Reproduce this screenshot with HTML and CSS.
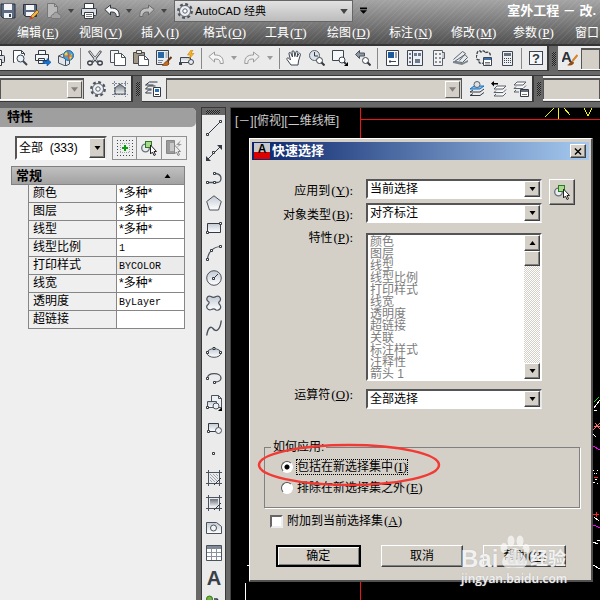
FILE: index.html
```html
<!DOCTYPE html>
<html lang="zh-CN">
<head>
<meta charset="utf-8">
<meta name="viewport" content="width=device-width, initial-scale=1">
<title>室外工程 - 改</title>
<link rel="stylesheet" href="styles.css">
</head>
<body>
<svg class="defs" aria-hidden="true">
  <defs>
    <linearGradient id="fade" x1="0" y1="0" x2="0" y2="1"><stop offset="0" stop-color="#c3cad4"/><stop offset="1" stop-color="#fff"/></linearGradient>
    <linearGradient id="deep" x1="0" y1="0" x2="0" y2="1"><stop offset="0" stop-color="#6d737c"/><stop offset="1" stop-color="#f4f5f7"/></linearGradient>
  </defs>
  <symbol id="save" viewBox="0 0 16 16"><path d="M1 1h14v14H3l-2-2z" fill="#5d6b80" stroke="#2b323d"/><path d="M4 1h8v6H4zM4 10h8v5H4z" fill="#f3f5f8"/><path d="M9 11h2v3H9z" fill="#39424f"/></symbol>
  <symbol id="saveas" viewBox="0 0 16 16"><path d="M.5 1.5h13v12h-11l-2-2z" fill="#5d6b80" stroke="#2b323d"/><path d="M3 2h8v5H3zM3 9h8v4H3z" fill="#f3f5f8"/><path d="M8 13l6-6 2 2-6 6-3 1z" fill="#f0b440" stroke="#7a4a10" stroke-width=".7"/><path d="M7 16l1-3 2 2z" fill="#d33"/></symbol>
  <symbol id="cloud" viewBox="0 0 16 16"><path d="M1.500.500h7l3 3v11h-10z" fill="#b9b9b9" stroke="#777"/><path d="M8.500.500v3h3" fill="none" stroke="#777"/><path d="M6 15.500c-2-2-.5-4 1.500-4 .5-3 4.500-3 5-.5 3 0 3.500 4.500 1 4.500z" fill="#a3a3a3" stroke="#777"/></symbol>
  <symbol id="print" viewBox="0 0 16 16"><path d="M3.500 6V.500h9V6" fill="#fff" stroke="#333a44"/><rect x=".5" y="5.500" width="15" height="7" rx="1" fill="#d9dde3" stroke="#333a44"/><path d="M3.500 9.500h9v6h-9z" fill="#fff" stroke="#333a44"/><path d="M5 11.500h6M5 13.500h6" stroke="#777"/></symbol>
  <symbol id="undo" viewBox="0 0 16 16"><path d="M.8 6.500L6.500 2v3c6 0 9 2 8.700 8.500h-3c0-4-1.700-4.500-5.700-4.500v3z" fill="#f6f6f6" stroke="currentColor"/></symbol>
  <symbol id="redo" viewBox="0 0 16 16"><path d="M15.200 6.500L9.500 2v3c-6 0-9 2-8.700 8.500h3c0-4 1.700-4.500 5.700-4.500v3z" fill="#f0f0f0" fill-opacity=".5" stroke="currentColor"/></symbol>
  <symbol id="down" viewBox="0 0 6 4"><path d="M0 0h6L3 4z" fill="currentColor"/></symbol>
  <symbol id="more" viewBox="0 0 8 8"><path d="M0 0h8v2H0zM0 3h8L4 7z" fill="#000"/></symbol>
  <symbol id="gear" viewBox="0 0 16 16"><circle cx="8" cy="8" r="6.700" fill="none" stroke="#4d545e" stroke-width="2.400" stroke-dasharray="2.800 2.460"/><circle cx="8" cy="8" r="5.500" fill="#eef0f3" stroke="#59616c"/><circle cx="8" cy="8" r="2.200" fill="#fff" stroke="#59616c"/></symbol>
  <symbol id="preview" viewBox="0 0 16 16"><path d="M2.500 12.500h-1V.500h8l3 3v2" fill="#fff" stroke="#3d4550"/><path d="M9.500.500v3h3" fill="none" stroke="#3d4550"/><circle cx="8.500" cy="8.500" r="3.500" fill="#eaf2fa" stroke="#3d4550"/><path d="M11 11l4 4" stroke="#3d4550" stroke-width="2"/></symbol>
  <symbol id="publish" viewBox="0 0 16 16"><path d="M3.500 4V.500h7V4M.500 4.500h13v6H.500zM3.500 8.500h6v5h-6z" fill="#f4f5f7" stroke="#333a44"/><path d="M8 11h4V8.500l4 3.800-4 3.700v-2.500H8z" fill="#1673d1" stroke="#0b4a90" stroke-width=".6"/></symbol>
  <symbol id="globe" viewBox="0 0 16 16"><path d="M.5 6l4-2 7 2v8l-4 2-7-3z" fill="#e3e6ea" stroke="#4a525d"/><path d="M.5 6l7 2.500V16" fill="none" stroke="#4a525d"/><circle cx="10.500" cy="5.500" r="5" fill="#3aa5dc" stroke="#1d6cae"/><path d="M7 3c2-2 3 0 2.500 2S7 7 6.500 5zM11 6l3-2v3l-2 3z" fill="#f3d330"/><path d="M10 .7l1 9.500M6 6h9" stroke="#e54b2c"/></symbol>
  <symbol id="cut" viewBox="0 0 16 16"><path d="M2 1l8.500 11M14 1L5.500 12" stroke="#333a44" stroke-width="2.400"/><path d="M2.500 1.500l8 10M13.500 1.500l-8 10" stroke="#eee" stroke-width="1.100"/><ellipse cx="3" cy="13" rx="2.300" ry="2" fill="none" stroke="#333a44" stroke-width="1.300"/><ellipse cx="13" cy="13" rx="2.300" ry="2" fill="none" stroke="#333a44" stroke-width="1.300"/></symbol>
  <symbol id="copy" viewBox="0 0 16 16"><path d="M.500.500h8v12h-8z" fill="#f6f6f6" stroke="#4a525d"/><path d="M4.500 3.500h7l4 4v8h-11z" fill="#fff" stroke="#4a525d"/><path d="M11.500 3.500v4h4" fill="none" stroke="#4a525d"/></symbol>
  <symbol id="paste" viewBox="0 0 16 16"><path d="M.5 2.500h11v11H.5z" fill="#a09788" stroke="#4d4a45"/><path d="M3.500.500h5v3h-5z" fill="#e8e8e8" stroke="#4d4a45"/><path d="M5.500 5.500h6l4 4v6h-10z" fill="#fff" stroke="#4a525d"/><path d="M11.500 5.500v4h4" fill="none" stroke="#4a525d"/></symbol>
  <symbol id="match" viewBox="0 0 16 16"><path d="M.500.500h12v14h-12z" fill="#e8ebef" stroke="#3d4550"/><path d="M2 2h6v6H2z" fill="#2a67a5"/><path d="M9.500 3h2M9.500 5h2M9.500 7h2M2 10.500h5M2 12.500h4" stroke="#7b8490"/><path d="M15.500 7l-4 4" stroke="#6a3511" stroke-width="2"/><path d="M6 15c2 0 3-4 5-4l2 2c0 2-3 4-7 2z" fill="#c56a1e" stroke="#733908" stroke-width=".7"/></symbol>
  <symbol id="blockedit" viewBox="0 0 16 16"><path d="M1.500 7.500h10v5h-10z" fill="url(#fade)" stroke="#3d4550"/><circle cx="12" cy="12" r="2.500" fill="#e9edf2" stroke="#3d4550"/><path d="M0 12h3v3H0z" fill="#3d4550"/><path d="M12 0L8.500 5h3L10 9l5-5.500h-3L14 0z" fill="#f9b81c" stroke="#ba7305" stroke-width=".5"/></symbol>
  <symbol id="hand" viewBox="0 0 16 16"><path d="M5 15L1 9.500C0 8 2 7.500 3 8.500l1.500 1.500L3 4c-.5-2 1.500-2 2-.5L6.500 7 6 2c0-1.700 2-1.700 2.200 0l.6 4.500L10 2c.4-1.500 2-1 1.900.5L11 7l1.700-3c.8-1.400 2.200-.5 1.700.8L12.500 11 12 15z" fill="#fff" stroke="#3d4550"/></symbol>
  <symbol id="zoomrt" viewBox="0 0 16 16"><circle cx="5.500" cy="5.500" r="5" fill="#dce2e9" stroke="#59616c"/><path d="M5.500 2v4H9" fill="none" stroke="#333a44"/><circle cx="10.500" cy="10.500" r="3" fill="#fff" stroke="#3d4550"/><path d="M12.500 12.500l3 3" stroke="#333a44" stroke-width="2"/></symbol>
  <symbol id="zoomwin" viewBox="0 0 16 16"><path d="M.500.500h11v10h-11z" fill="#f6f7f9" stroke="#3d4550"/><circle cx="10" cy="10" r="3" fill="#fff" stroke="#3d4550"/><path d="M12 12l2 2" stroke="#333a44" stroke-width="2"/><path d="M16 12v4h-4z" fill="#000"/></symbol>
  <symbol id="zoomprev" viewBox="0 0 16 16"><path d="M.5 4.500l4-4v2.500h5v3h-5v2.500z" fill="#8d96a2" stroke="#4a525d"/><circle cx="10.500" cy="10.500" r="3" fill="#fff" stroke="#3d4550"/><path d="M12.500 12.500l3 3" stroke="#333a44" stroke-width="2"/></symbol>
  <symbol id="props" viewBox="0 0 16 16"><path d="M2.500.500h12v15h-12z" fill="#fff" stroke="#3d4550"/><path d="M4 2h6v6H4z" fill="#1d5b9c"/><path d="M12 2v6" stroke="#9ba3ad" stroke-width="2"/><path d="M5 11.500h7M6 10v3" stroke="#3d4550"/></symbol>
  <symbol id="center" viewBox="0 0 16 16"><path d="M.500.500h15v15H.500z" fill="#eef0f3" stroke="#3d4550"/><path d="M5.500 1v14" stroke="#3d4550"/><path d="M2 3h2v2H2zM2 7h2v2H2zM2 11h2v2H2zM7 3h3v3H7zM11 3h3v3h-3zM8 9h5v4H8z" fill="#6b7b90"/></symbol>
  <symbol id="palette" viewBox="0 0 16 16"><path d="M3.500.500h9v15h-9z" fill="#f3f3f3" stroke="#59616c"/><path d="M12 2.500h2.500v6H12" fill="#ccc" stroke="#59616c"/><path d="M5 3h2v2H5zM9 3h2v2H9zM5 7h2v2H5zM9 7h2v2H9zM5 11h2v2H5zM9 11h2v2H9z" fill="#8b929c"/></symbol>
  <symbol id="sheets" viewBox="0 0 16 16"><path d="M.5 9.500l9-8 3 2-6 7M3 10.500l9-6 2.500 3-5 5-8-1z" fill="#e9ecef" stroke="#59616c"/><path d="M0 11l9 2 6-3v2l-6 3-9-2z" fill="#7c858f"/></symbol>
  <symbol id="markup" viewBox="0 0 16 16"><path d="M1 4c0-3 3-4 4-2 2-2 4-1 4 1 3-2 6 0 5 3M1 5c-2 3 0 5 2 5-1 3 2 4 4 3" fill="none" stroke="#333a44" stroke-width="1.300" stroke-dasharray="3 1"/><path d="M7.500 7.500h8v8h-8z" fill="#fff" stroke="#3d4550"/><path d="M8 8h7v2H8z" fill="#3c71ad"/><path d="M9 12.500h5M9 14h5" stroke="#777"/></symbol>
  <symbol id="calc" viewBox="0 0 16 16"><path d="M3.500 1.500h10v14h-10z" fill="#edeff2" stroke="#3d4550"/><path d="M5 3h7v3H5z" fill="#66707c"/><path d="M5 8.500h7M5 10.500h7M5 12.500h7" stroke="#3d4550" stroke-dasharray="1 1"/></symbol>
  <symbol id="help" viewBox="0 0 16 16"><rect x="1.500" y="1.500" width="13" height="13" fill="#f5f6f8" stroke="#3d4550"/><text x="8" y="13" text-anchor="middle" font-family="Liberation Sans, sans-serif" font-size="13" font-weight="bold" fill="#333a44">?</text></symbol>
  <symbol id="textstyle" viewBox="0 0 16 16"><text x="-1" y="12" font-family="Liberation Sans, sans-serif" font-size="15" font-weight="bold" fill="#2c3138">A</text><path d="M15.500 5l-5 6" stroke="#d98324" stroke-width="2"/><path d="M5 15c2 0 3-4 5-4l2 1.500c0 2-3 4-7 2.500z" fill="#8e4c18"/></symbol>
  <symbol id="grid" viewBox="0 0 16 16"><path d="M2.500 0v16M13.500 0v16M0 2.500h16M0 13.500h16" stroke="#7e8794" stroke-dasharray="2 1"/><path d="M3 12V7l5-4 5 4v6H4z" fill="url(#deep)" stroke="#4a525d"/></symbol>
  <symbol id="layerprops" viewBox="0 0 16 16"><path d="M.5 4l4-3h8M.5 4h8M.5 8l3-3h7M.5 8h6M.5 12l3-3h3M.5 12h6" fill="none" stroke="#333a44"/><path d="M8.500 6.500h7v9h-7z" fill="#fff" stroke="#333a44"/><path d="M10 8h4v3h-4z" fill="#2272c1"/><path d="M10 13.500h4" stroke="#333a44"/></symbol>
  <symbol id="layercur" viewBox="0 0 16 16"><path d="M1 8l4-3h10l-4 3z" fill="#7db9ea" stroke="#1470c8"/><path d="M1 11l3-2M1 11h10l4-3M1 14.500l3-2M1 14.500h10l4-3" fill="none" stroke="#333a44"/><circle cx="8" cy="3.500" r="3" fill="#dce1e7" stroke="#59616c"/></symbol>
  <symbol id="layerback" viewBox="0 0 16 16"><path d="M0 2.500L3 0v2h4v1.500H3v2z" fill="#000"/><path d="M3 8l3-3h9l-3 3zM3 11.500l2-2M3 11.500h9l3-3M3 15l2-2M3 15h9l3-3" fill="#fff" stroke="#59616c"/></symbol>
  <symbol id="layerstate" viewBox="0 0 16 16"><path d="M1 4l3-3h9l-3 3zM1 7.500l2-2M1 7.500h9l3-3M1 11l2-2M1 11h5" fill="#fff" stroke="#59616c"/><path d="M7.500 8.500h8v7h-8z" fill="#fff" stroke="#333a44"/><path d="M8 9h7v2H8z" fill="#66707c"/><path d="M9 13.500h5" stroke="#777"/></symbol>
  <symbol id="addpick" viewBox="0 0 16 16"><path d="M0 .5h16M0 15.500h16M.5 0v16M15.500 0v16" stroke="#3d4550" stroke-dasharray="1 2"/><path d="M3 3.500h10M3 12.500h10M3.500 3v10M12.500 3v10" stroke="#9aa1aa" stroke-dasharray="1 1"/><path d="M8 5v6M5 8h6" stroke="#0c9a10" stroke-width="2"/></symbol>
  <symbol id="pick" viewBox="0 0 16 16"><circle cx="4.500" cy="8" r="3.800" fill="#e8ecef" stroke="#68727c" stroke-width="1.300"/><rect x="4.500" y="1.500" width="6" height="6" fill="#a9d98c" stroke="#2b7a22"/><path d="M9.500 5v9l2-2 1.500 3.500 1.500-.7L13 11.500h2.500z" fill="#fff" stroke="#222"/></symbol>
  <symbol id="quick" viewBox="0 0 16 16"><path d="M.500.500h8v13h-8z" fill="#9b9b9b" stroke="#888"/><path d="M4 3h4v8H4z" fill="#c9c9c9"/><path d="M15 0l-5 5h3l-3 3 6-4h-3z" fill="#999"/><path d="M8.500 5v9l2-2 1.500 3.500 1.500-.7-1.500-3.300h2.500z" fill="#eee" stroke="#888"/></symbol>
  <symbol id="d-line" viewBox="0 0 16 16"><path d="M1.500 14.500l13-13" stroke="#333a44"/><path d="M.500 13.500h2v2h-2zM13.500.500h2v2h-2z" fill="#fff" stroke="#333a44"/></symbol>
  <symbol id="d-xline" viewBox="0 0 16 16"><path d="M1.500 14.500l13-13" stroke="#333a44"/><path d="M0 16v-5l5 5zM16 0v5l-5-5z" fill="#333a44"/><path d="M6.500 6.500h2v2h-2z" fill="#fff" stroke="#333a44"/></symbol>
  <symbol id="d-pline" viewBox="0 0 16 16"><path d="M2 12.500h9c5 0 6-8-1-9" fill="none" stroke="#4a525d" stroke-width="1.300"/><path d="M.500 11.500h2v2h-2zM7.500 11.500h2v2h-2zM7.500 2.500h2v2h-2z" fill="#fff" stroke="#333a44"/></symbol>
  <symbol id="d-poly" viewBox="0 0 16 16"><path d="M8 .8l7.300 5.700-2.800 8.500h-9L.7 6.500z" fill="url(#fade)" stroke="#4a525d"/></symbol>
  <symbol id="d-rect" viewBox="0 0 16 16"><path d="M1.500 3.500h13v9h-13z" fill="url(#fade)" stroke="#333a44"/><path d="M.500 11.500h2v2h-2zM13.500 2.500h2v2h-2z" fill="#fff" stroke="#333a44"/></symbol>
  <symbol id="d-arc" viewBox="0 0 16 16"><path d="M1.500 14.500C2 7 7 2 14.500 1.500" fill="none" stroke="#4a525d" stroke-width="1.200"/><path d="M.500 13.500h2v2h-2zM4.500 4.500h2v2h-2zM13.500.500h2v2h-2z" fill="#fff" stroke="#333a44"/></symbol>
  <symbol id="d-circle" viewBox="0 0 16 16"><circle cx="8" cy="8" r="7.300" fill="url(#fade)" stroke="#4a525d"/><path d="M8 8l4-4" stroke="#333a44"/><path d="M6.500 7.500h2v2h-2z" fill="#fff" stroke="#333a44"/></symbol>
  <symbol id="d-cloud" viewBox="0 0 16 16"><path d="M3 7C-1 5 1 0 5 1.500c2 1.500 3 1.500 5 0 4-1.500 6 3 3 5.500-1 1 0 2 1 3 2 3-1 6-4 5-1.500-1.500-3-1.500-4.500-.5C2 16-1 12 2 9.500c1-1 1.500-1.500 1-2.500z" fill="url(#fade)" stroke="#4a525d" stroke-width="1.200"/></symbol>
  <symbol id="d-spline" viewBox="0 0 16 16"><path d="M.7 15.500C2 7 5 6 7 8.500c3 4 7 2 8.300-8" fill="none" stroke="#4a525d" stroke-width="1.400"/></symbol>
  <symbol id="d-ellipse" viewBox="0 0 16 16"><ellipse cx="8" cy="8" rx="7" ry="4.300" fill="url(#fade)" stroke="#4a525d"/><path d="M.500 6.500h2v2h-2zM13.500 6.500h2v2h-2zM7 2.500h2v2H7z" fill="#fff" stroke="#333a44"/></symbol>
  <symbol id="d-earc" viewBox="0 0 16 16"><path d="M1.500 8C2 2 15 2.500 15 8c0 2.500-3 4-6 4" fill="none" stroke="#4a525d" stroke-width="1.300"/><path d="M.500 7.500h2v2h-2zM7.500 11.500h2v2h-2z" fill="#fff" stroke="#333a44"/></symbol>
  <symbol id="d-insert" viewBox="0 0 16 16"><path d="M5.500.500h7l3 3v9h-10z" fill="#eef0f3" stroke="#4a525d"/><path d="M12.500.500v3h3" fill="none" stroke="#4a525d"/><path d="M1.500 6.500h9v6h-9z" fill="url(#fade)" stroke="#4a525d"/><circle cx="10" cy="11" r="3" fill="#eef0f3" stroke="#4a525d"/><path d="M.500 11.500h2v2h-2z" fill="#fff" stroke="#333a44"/><path d="M16 12v4h-4z" fill="#000"/></symbol>
  <symbol id="d-block" viewBox="0 0 16 16"><path d="M2.500 3.500h10v8h-10z" fill="url(#fade)" stroke="#333a44"/><circle cx="12.500" cy="10.500" r="3" fill="#eef0f3" stroke="#4a525d"/><path d="M1.500 10.500h2v2h-2z" fill="#fff" stroke="#333a44"/></symbol>
  <symbol id="d-point" viewBox="0 0 16 16"><path d="M6.500 7.500h2v2h-2z" fill="#fff" stroke="#333a44"/></symbol>
  <symbol id="d-hatch" viewBox="0 0 16 16"><path d="M2.500 0v16M13.500 0v16M0 2.500h16M0 13.500h16" stroke="#4a525d"/><path d="M4 4l8 8M4 7l5 5M4 10l2 2M7 4l5 5M10 4l2 2" stroke="#8a929c" stroke-width=".8"/><path d="M8 15l7-7" stroke="#333a44"/></symbol>
  <symbol id="d-grad" viewBox="0 0 16 16"><path d="M2.500 0v16M13.500 0v16M0 2.500h16M0 13.500h16" stroke="#4a525d"/><path d="M4 4h8v8H4z" fill="url(#deep)"/><path d="M8 15l7-7" stroke="#333a44"/></symbol>
  <symbol id="d-region" viewBox="0 0 16 16"><path d="M.5 2.500h10l5 4v7H.5z" fill="url(#fade)" stroke="#4a525d"/><circle cx="7.500" cy="8" r="3" fill="#f4f4f4" stroke="#4a525d"/></symbol>
  <symbol id="d-table" viewBox="0 0 16 16"><path d="M.500.500h15v15H.500z" fill="#fff" stroke="#4a525d"/><path d="M1 1h14v3H1z" fill="#808a96"/><path d="M1 7.500h14M1 11.500h14M5.500 4v11M10.500 4v11" stroke="#8a929c"/></symbol>
  <symbol id="d-text" viewBox="0 0 16 16"><text x="8" y="15" text-anchor="middle" font-family="Liberation Sans, sans-serif" font-size="20" font-weight="bold" fill="#3a3f47">A</text></symbol>
  <symbol id="d-add" viewBox="0 0 16 16"><circle cx="3.500" cy="4" r="3" fill="#6fb544" stroke="#39781a"/><path d="M8 4h3l2 3" fill="none" stroke="#333a44" stroke-width="1.500"/></symbol>
</svg>

<header class="top">
  <div class="titlebar">
    <button class="ic" aria-label="保存"><svg><use href="#save"/></svg></button>
    <button class="ic" aria-label="另存为"><svg><use href="#saveas"/></svg></button>
    <button class="ic" aria-label="云选项"><svg><use href="#cloud"/></svg></button>
    <button class="tri" aria-label="展开"><svg><use href="#down"/></svg></button>
    <button class="ic" aria-label="打印"><svg><use href="#print"/></svg></button>
    <button class="ic" aria-label="放弃"><svg><use href="#undo"/></svg></button>
    <button class="tri" aria-label="放弃列表"><svg><use href="#down"/></svg></button>
    <button class="ic dim" aria-label="重做"><svg><use href="#redo"/></svg></button>
    <button class="tri" aria-label="重做列表"><svg><use href="#down"/></svg></button>
    <div class="workspace">
      <svg class="gear"><use href="#gear"/></svg>
      <select aria-label="工作空间"><option>AutoCAD 经典</option></select>
      <svg class="caret"><use href="#down"/></svg>
    </div>
    <button class="more" aria-label="自定义"><svg><use href="#more"/></svg></button>
    <h1>室外工程 － 改.</h1>
  </div>
  <nav class="menu">
    <a href="#">编辑<i>(<u>E</u>)</i></a><a href="#">视图<i>(<u>V</u>)</i></a><a href="#">插入<i>(<u>I</u>)</i></a><a href="#">格式<i>(<u>O</u>)</i></a><a href="#">工具<i>(<u>T</u>)</i></a><a href="#">绘图<i>(<u>D</u>)</i></a><a href="#">标注<i>(<u>N</u>)</i></a><a href="#">修改<i>(<u>M</u>)</i></a><a href="#">参数<i>(<u>P</u>)</i></a><a href="#">窗口</a>
  </nav>
</header>

<div class="bars">
  <div class="bar">
    <div class="group first">
      <button class="ic" aria-label="打印"><svg><use href="#print"/></svg></button>
      <button class="ic" aria-label="打印预览"><svg><use href="#preview"/></svg></button>
      <button class="ic" aria-label="发布"><svg><use href="#publish"/></svg></button>
      <button class="ic" aria-label="三维打印"><svg><use href="#globe"/></svg></button>
      <span class="sep"></span>
      <button class="ic" aria-label="剪切"><svg><use href="#cut"/></svg></button>
      <button class="ic" aria-label="复制"><svg><use href="#copy"/></svg></button>
      <button class="ic" aria-label="粘贴"><svg><use href="#paste"/></svg></button>
      <button class="ic" aria-label="特性匹配"><svg><use href="#match"/></svg></button>
      <button class="ic" aria-label="块编辑器"><svg><use href="#blockedit"/></svg></button>
      <span class="sep"></span>
      <button class="ic off" aria-label="放弃"><svg><use href="#undo"/></svg></button>
      <button class="tri off" aria-label="放弃列表"><svg><use href="#down"/></svg></button>
      <button class="ic off" aria-label="重做"><svg><use href="#redo"/></svg></button>
      <button class="tri off" aria-label="重做列表"><svg><use href="#down"/></svg></button>
      <span class="sep"></span>
      <button class="ic" aria-label="平移"><svg><use href="#hand"/></svg></button>
      <button class="ic" aria-label="实时缩放"><svg><use href="#zoomrt"/></svg></button>
      <button class="ic" aria-label="窗口缩放"><svg><use href="#zoomwin"/></svg></button>
      <button class="ic" aria-label="缩放上一个"><svg><use href="#zoomprev"/></svg></button>
      <span class="sep"></span>
      <button class="ic" aria-label="特性"><svg><use href="#props"/></svg></button>
      <button class="ic" aria-label="设计中心"><svg><use href="#center"/></svg></button>
      <button class="ic" aria-label="工具选项板"><svg><use href="#palette"/></svg></button>
      <button class="ic" aria-label="图纸集"><svg><use href="#sheets"/></svg></button>
      <button class="ic" aria-label="标记集"><svg><use href="#markup"/></svg></button>
      <button class="ic" aria-label="计算器"><svg><use href="#calc"/></svg></button>
      <span class="sep"></span>
      <button class="ic" aria-label="帮助"><svg><use href="#help"/></svg></button>
    </div>
    <span class="grip"></span>
    <div class="group grow">
      <button class="ic" aria-label="文字样式"><svg><use href="#textstyle"/></svg></button>
      <select class="field" aria-label="文字样式列表"></select>
    </div>
  </div>
  <div class="bar">
    <div class="group combo-first">
      <span class="combo"><select class="field" aria-label="工作空间"></select><svg><use href="#down"/></svg></span>
      <button class="ic" aria-label="设置"><svg><use href="#gear"/></svg></button>
      <button class="ic" aria-label="栅格"><svg><use href="#grid"/></svg></button>
    </div>
    <span class="grip"></span>
    <div class="group layer">
      <button class="ic" aria-label="图层特性"><svg><use href="#layerprops"/></svg></button>
      <span class="combo"><select class="field" aria-label="图层"></select><svg><use href="#down"/></svg></span>
      <button class="ic" aria-label="置为当前"><svg><use href="#layercur"/></svg></button>
      <button class="ic" aria-label="上一个图层"><svg><use href="#layerback"/></svg></button>
      <button class="ic" aria-label="图层状态"><svg><use href="#layerstate"/></svg></button>
    </div>
    <span class="grip"></span>
    <div class="group tail"><select class="field" aria-label="颜色"></select></div>
  </div>
</div>

<main>
  <aside class="palette">
    <h2>特性</h2>
    <div class="pick-row">
      <span class="drop"><select aria-label="选择对象"><option>全部&nbsp; (333)</option></select><span class="arrow"><svg><use href="#down"/></svg></span></span>
      <div class="tools">
        <button aria-label="切换"><svg><use href="#addpick"/></svg></button><button aria-label="选择对象"><svg><use href="#pick"/></svg></button><button aria-label="快速选择"><svg><use href="#quick"/></svg></button>
      </div>
    </div>
    <h3>常规<svg><use href="#down"/></svg></h3>
    <table>
      <tr><th>颜色</th><td>*多种*</td></tr>
      <tr><th>图层</th><td>*多种*</td></tr>
      <tr><th>线型</th><td>*多种*</td></tr>
      <tr><th>线型比例</th><td><i class="code">1</i></td></tr>
      <tr class="locked"><th>打印样式</th><td><i class="code">BYCOLOR</i></td></tr>
      <tr><th>线宽</th><td>*多种*</td></tr>
      <tr><th>透明度</th><td><i class="code">ByLayer</i></td></tr>
      <tr><th>超链接</th><td></td></tr>
    </table>
  </aside>

  <div class="draw">
    <span class="handle"></span>
    <button aria-label="直线"><svg><use href="#d-line"/></svg></button>
    <button aria-label="构造线"><svg><use href="#d-xline"/></svg></button>
    <button aria-label="多段线"><svg><use href="#d-pline"/></svg></button>
    <button aria-label="多边形"><svg><use href="#d-poly"/></svg></button>
    <button aria-label="矩形"><svg><use href="#d-rect"/></svg></button>
    <button aria-label="圆弧"><svg><use href="#d-arc"/></svg></button>
    <button aria-label="圆"><svg><use href="#d-circle"/></svg></button>
    <button aria-label="修订云线"><svg><use href="#d-cloud"/></svg></button>
    <button aria-label="样条曲线"><svg><use href="#d-spline"/></svg></button>
    <button aria-label="椭圆"><svg><use href="#d-ellipse"/></svg></button>
    <button aria-label="椭圆弧"><svg><use href="#d-earc"/></svg></button>
    <button aria-label="插入块"><svg><use href="#d-insert"/></svg></button>
    <button aria-label="创建块"><svg><use href="#d-block"/></svg></button>
    <button aria-label="点"><svg><use href="#d-point"/></svg></button>
    <button aria-label="图案填充"><svg><use href="#d-hatch"/></svg></button>
    <button aria-label="渐变色"><svg><use href="#d-grad"/></svg></button>
    <button aria-label="面域"><svg><use href="#d-region"/></svg></button>
    <button aria-label="表格"><svg><use href="#d-table"/></svg></button>
    <button aria-label="多行文字"><svg><use href="#d-text"/></svg></button>
    <button aria-label="添加选定对象"><svg><use href="#d-add"/></svg></button>
  </div>

  <section class="canvas">
    <svg class="drawing" aria-hidden="true">
      <g fill="none" shape-rendering="crispEdges">
        <path d="M129.500 0v492M130 11.500h240" stroke="#f01414"/>
        <path d="M14.500 475v20M16 457h2M363 300l6-8M363 302h3M362 326l3 3M363 409l5 4M362 457l7 4M366 432h4M362 434l5 2" stroke="#fff"/>
        <path d="M314 9l9-9M327.500 0v11M333 0l6 7M353 0l4 8 4-8" stroke="#f5f514"/>
        <path d="M363 294l5-5" stroke="#1fe01f"/>
        <path d="M362 322l7-7M364 315l5 6M363 318h6" stroke="#ff7070"/>
        <path d="M362 338l7 4M362 417l8 3" stroke="#f0f"/>
        <path d="M362 362l6 6M363 366l6-6M362 374l7 3M364 371h4" stroke="#fff" stroke-dasharray="2 2"/>
        <path d="M363 369h4M362 406h6M365 404v5" stroke="#f22"/>
      </g>
    </svg>
    <p class="view">[－][俯视][二维线框]</p>

    <form class="dialog">
      <header>
        <svg class="logo" viewBox="0 0 16 16"><path d="M0 0h16v16H0z" fill="#c9c9c9"/><path d="M0 9h16v7H0z" fill="#dc0000"/><text x="8" y="10" text-anchor="middle" font-family="Liberation Sans, sans-serif" font-size="12" font-weight="bold">A</text></svg>
        <h2>快速选择</h2>
        <button type="button" class="close" aria-label="关闭"><svg viewBox="0 0 8 8"><path d="M.5.5l7 7M7.500.5l-7 7" stroke="#000" stroke-width="1.600"/></svg></button>
      </header>
      <div class="fields">
        <label for="apply">应用到<i>(<u>Y</u>):</i></label>
        <span class="drop"><select id="apply"><option>当前选择</option></select><span class="arrow"><svg><use href="#down"/></svg></span></span>
        <button type="button" class="picker" aria-label="选择对象"><svg><use href="#pick"/></svg></button>
        <label for="type">对象类型<i>(<u>B</u>):</i></label>
        <span class="drop"><select id="type"><option>对齐标注</option></select><span class="arrow"><svg><use href="#down"/></svg></span></span>
        <label for="props-list" class="up">特性<i>(<u>P</u>):</i></label>
        <span class="list">
          <select id="props-list" size="12" disabled>
            <option>颜色</option><option>图层</option><option>线型</option><option>线型比例</option><option>打印样式</option><option>线宽</option><option>透明度</option><option>超链接</option><option>关联</option><option>标注样式</option><option>注释性</option><option>箭头 1</option>
          </select>
          <span class="scroll"><span class="arrow rise"><svg><use href="#down"/></svg></span><span class="thumb"></span><span class="arrow end"><svg><use href="#down"/></svg></span></span>
        </span>
        <label for="op" class="op">运算符<i>(<u>O</u>):</i></label>
        <span class="drop op"><select id="op"><option>全部选择</option></select><span class="arrow"><svg><use href="#down"/></svg></span></span>
      </div>
      <fieldset>
        <legend>如何应用:</legend>
        <label><input type="radio" name="how" checked><span class="focus">包括在新选择集中<i>(<u>I</u>)</i></span></label>
        <label><input type="radio" name="how"><span>排除在新选择集之外<i>(<u>E</u>)</i></span></label>
        <svg class="ring" viewBox="0 0 184 46" aria-hidden="true"><ellipse cx="92" cy="23" rx="90" ry="20" fill="none" stroke="#f23a34" stroke-width="2.500"/></svg>
      </fieldset>
      <label class="append"><input type="checkbox"><span>附加到当前选择集<i>(<u>A</u>)</i></span></label>
      <div class="actions">
        <button type="submit" class="default">确定</button>
        <button type="button">取消</button>
        <button type="button">帮助<i>(<u>H</u>)</i></button>
      </div>
      <div class="mark">
        <svg viewBox="0 0 30 34" aria-hidden="true"><g fill="#fff"><ellipse cx="4" cy="13" rx="3.500" ry="5"/><ellipse cx="11" cy="6" rx="3.500" ry="5.500"/><ellipse cx="20" cy="6" rx="3.500" ry="5.500"/><ellipse cx="26" cy="14" rx="3.500" ry="5"/><path d="M15 13c4 0 5 5 9 8 5 5 3 12-3 12-4 0-8-1-12 0-7 0-9-7-4-12 4-3 5-8 10-8z"/></g></svg>
        <p class="brand"><b>Bai</b><b class="du">du</b><span>经验</span></p>
        <p class="site">jingyan.baidu.com</p>
      </div>
    </form>
  </section>
</main>
</body>
</html>
```
FILE: styles.css
```css
* { box-sizing: border-box; }

body {
  margin: 0;
  height: 100vh;
  display: flex;
  flex-direction: column;
  overflow: hidden;
  background: #686868;
  color: #000;
  font: 12px/16px "Liberation Sans", "Noto Sans CJK SC", sans-serif;
}

button, select, input { font: inherit; color: inherit; margin: 0; }
button { padding: 0; border: 0; background: none; display: flex; align-items: center; justify-content: center; flex: none; }
select { appearance: none; border: 0; border-radius: 0; outline: 0; }
h1, h2, h3, p { margin: 0; font-size: 13px; }
i { padding-left: 1px; font: 13px/12px "Liberation Serif", serif; }
.code { padding-left: 0; font: 10px/12px "Liberation Mono", monospace; }
svg { display: block; overflow: visible; }
.defs { position: absolute; width: 0; height: 0; }

.ic, .ic svg { width: 16px; height: 16px; }
.tri, .tri svg { width: 6px; height: 4px; }

/* title bar and menu */
.top {
  flex: none;
  border-bottom: 2px solid #343434;
  background:
    repeating-linear-gradient(135deg, rgba(255,255,255,.06) 0 1px, transparent 1px 4px),
    linear-gradient(#a4a4a4, #7c7c7c 50%, #515151);
}
.titlebar { display: flex; align-items: center; height: 22px; gap: 7px; overflow: hidden; }
.titlebar .ic { color: #30363f; }
.titlebar .dim { color: #6a6a6a; }
.titlebar .tri { color: #444; margin-left: -1px; }
.workspace {
  display: flex;
  align-items: center;
  width: 179px;
  height: 22px;
  padding: 0 4px 0 2px;
  border: 1px solid #666;
  background: linear-gradient(#e2e2e2, #bcbcbc);
}
.workspace .gear { width: 16px; height: 16px; flex: none; }
.workspace select { flex: 1; min-width: 0; background: none; padding: 0 0 0 2px; font-size: 11px; }
.workspace .caret { width: 8px; height: 5px; color: #444; }
.more, .more svg { width: 7px; height: 8px; }
.titlebar h1 { margin-left: auto; padding-right: 4px; color: #fff; white-space: nowrap; }

.menu { display: flex; gap: 20px; padding: 0 0 0 17px; height: 22px; align-items: center; overflow: hidden; }
.menu a { flex: none; width: 42px; color: #fff; text-decoration: none; white-space: nowrap; }

/* docked toolbars */
.bars { flex: none; }
.bar { display: flex; height: 25px; margin-bottom: 4px; }
.bar + .bar { height: 27px; margin-bottom: 5px; border-top: 1px solid #383838; }
.group {
  display: flex;
  align-items: center;
  gap: 7px;
  flex: none;
  background: #ebebeb;
  border-right: 1px solid #383838;
  border-bottom: 1px solid #383838;
}
.first { margin-left: -11px; padding-right: 3px; }
.off { color: #9b9b9b; }
.sep { width: 1px; height: 21px; margin: 0 -1px; background: #888; }
.grip {
  flex: none;
  width: 10px;
  border-left: 1px solid #383838;
  background: #666;
  display: flex;
  align-items: center;
  justify-content: center;
}
.grip::before {
  content: "";
  width: 4px;
  height: 14px;
  background: repeating-conic-gradient(#222 0 25%, #777 0 50%) 0 0 / 2px 2px;
}
.grow, .tail { flex: 1; min-width: 0; border-right: 0; }
.grow { padding-left: 4px; gap: 3px; }
.field {
  flex: 1;
  min-width: 0;
  width: 100%;
  height: 21px;
  background: #d4d0c8;
  border: 1px solid #555;
  border-width: 2px 1px 0 1px;
  box-shadow: 0 1px 0 #fff;
}
.combo { position: relative; display: flex; }
.combo svg {
  position: absolute;
  top: 3px;
  right: 2px;
  width: 15px;
  height: 17px;
  padding: 5px 3px;
  color: #808080;
  border: 1px solid #fff;
  border-right-color: #555;
  border-bottom-color: #555;
}
.combo-first .combo { width: 84px; }
.combo-first { padding-right: 3px; gap: 6px; }
.layer { flex: 1 1 391px; max-width: 391px; padding: 0 3px; gap: 5px; }
.layer .combo { flex: 1; margin-right: 1px; }
.layer .combo ~ .ic { margin-left: 1px; }

/* work area */
main { flex: 1; min-height: 0; display: flex; }

.palette { flex: 0 0 196px; background: #efefef; margin-top: 1px; border-radius: 0 5px 0 0; }
.palette h2 { height: 19px; padding-left: 7px; line-height: 18px; background: #9f9f9f; border-radius: 0 5px 5px 0; }
.pick-row { display: flex; gap: 5px; padding: 9px 9px 6px 15px; }
.drop { position: relative; display: flex; height: 21px; border: 2px solid #fff; border-top-color: #555; border-left-color: #555; border-right-color: #e8e8e8; background: #fff; min-width: 0; }
.drop select { width: 100%; padding: 0 18px 0 2px; background: none; line-height: 16px; }
.pick-row .drop { width: 92px; height: 24px; }
.arrow {
  position: absolute;
  right: 0;
  top: 0;
  bottom: 0;
  width: 16px;
  display: flex;
  align-items: center;
  justify-content: center;
  background: #d4d0c8;
  border: 1px solid #fff;
  border-right-color: #404040;
  border-bottom-color: #404040;
  box-shadow: inset -1px -1px #808080;
  pointer-events: none;
}
.arrow svg { width: 7px; height: 4px; }
.tools { display: flex; }
.tools button { width: 25px; height: 24px; border: 1px solid #909090; background: #efefef; }
.tools button + button { border-left: 0; }
.tools svg { width: 16px; height: 16px; }
.palette h3 {
  display: flex;
  align-items: center;
  justify-content: space-between;
  margin: 0 11px;
  padding: 0 13px 0 4px;
  height: 19px;
  line-height: 16px;
  border: 1px solid #808080;
  background: linear-gradient(#c0c0c0, #a2a2a2);
}
.palette h3 svg { width: 7px; height: 4px; transform: rotate(180deg); }
.palette table { width: 157px; margin: -1px 0 0 28px; border-collapse: collapse; table-layout: fixed; }
.palette th, .palette td { height: 18px; padding: 0 2px 0 4px; border: 1px solid #868686; font-weight: normal; text-align: left; line-height: 15px; white-space: nowrap; }
.palette th { width: 88px; }
.palette td { background: #fff; padding-left: 2px; }
.palette .locked td { background: #ebebeb; }

.draw {
  flex: 0 0 25px;
  margin-left: 5px;
  display: flex;
  flex-direction: column;
  align-items: center;
  background: #ebebeb;
  border: 1px solid #383838;
  border-bottom: 0;
  overflow: hidden;
}
.handle { flex: none; align-self: stretch; height: 7px; padding: 2px 4px; background: #666; }
.handle::before { content: ""; display: block; width: 14px; height: 4px; background: repeating-conic-gradient(#222 0 25%, #777 0 50%) 0 0 / 2px 2px; }
.draw button { width: 22px; height: 25px; }
.draw svg { width: 16px; height: 16px; }

.canvas {
  position: relative;
  flex: 1;
  min-width: 0;
  margin-left: 4px;
  background: #000;
  border-left: 1px solid #444;
  border-top: 1px solid #444;
  overflow: hidden;
}
.drawing { position: absolute; top: 0; left: 0; width: 100%; height: 100%; }
.view { position: relative; padding: 5px 0 0 4px; font-size: 12px; color: #ccc; white-space: nowrap; }

/* dialog */
.dialog {
  position: absolute;
  top: 30px;
  left: 18px;
  right: 7px;
  padding: 3px 2px 13px;
  background: #d4d0c8;
  border: 1px solid #fff;
  border-right: 2px solid #505050;
  border-bottom: 2px solid #505050;
}
.dialog header { display: flex; align-items: center; height: 18px; padding: 0 3px 0 2px; background: linear-gradient(90deg, #0a246a, #a6caf0); }
.logo { width: 16px; height: 16px; }
.dialog h2 { flex: 1; padding-left: 2px; color: #fff; line-height: 16px; }
.close, .picker, .actions button {
  background: #d4d0c8;
  border: 1px solid #fff;
  border-right-color: #404040;
  border-bottom-color: #404040;
  box-shadow: inset -1px -1px #808080;
}
.close { width: 16px; height: 14px; }
.close svg { width: 8px; height: 7px; }
.fields {
  display: grid;
  grid-template-columns: 101px minmax(0, 1fr) 26px;
  grid-template-rows: 20px 20px 148px 20px;
  column-gap: 7px;
  row-gap: 4px;
  padding: 19px 14px 0 0;
}
.fields > label { grid-column: 1; text-align: right; align-self: center; padding-top: 4px; white-space: nowrap; }
.fields > .drop, .list { grid-column: 2; margin-left: 6px; }
.fields > .drop { height: 20px; }
.fields > .list { margin-top: 6px; }
.fields > .up { align-self: start; margin-top: 2px; padding-top: 0; }
.fields > .up { margin-top: 3px; padding-top: 0; }
.picker { grid-column: 3; grid-row: 1; height: 26px; width: 26px; }
.picker svg { width: 16px; height: 16px; }
.list { position: relative; height: 148px; border: 2px solid #fff; border-top-color: #555; border-left-color: #555; background: #fff; overflow: hidden; }
.list select { display: block; width: 100%; height: 147px; margin-top: -3px; padding: 0; background: #fff; opacity: 1; overflow: hidden; scrollbar-width: none; }
.list option { height: 12px; min-height: 12px; padding: 0 2px; line-height: 12px; color: #7c7c7c; overflow: visible; }
.scroll { position: absolute; top: 0; right: 0; bottom: 0; width: 16px; background: repeating-conic-gradient(#fff 0 25%, #d4d0c8 0 50%) 0 0 / 2px 2px; }
.scroll .rise { bottom: auto; height: 16px; }
.scroll .rise svg { transform: rotate(180deg); }
.scroll .end { top: auto; height: 16px; }
.thumb { display: block; margin-top: 16px; height: 15px; background: #d4d0c8; border: 1px solid #fff; border-right-color: #404040; border-bottom-color: #404040; box-shadow: inset -1px -1px #808080; }
.fields > .op { margin-top: 10px; }
.fields > label.op { padding-top: 2px; }

fieldset {
  position: relative;
  margin: 41px 9px 0 12px;
  padding: 2px 0 9px 16px;
  min-width: 0;
  border: 1px solid #808080;
  box-shadow: 1px 1px #fff;
}
legend { margin-left: -10px; padding: 0 2px; line-height: 14px; }
fieldset label, .append { display: flex; align-items: center; gap: 4px; }
fieldset label { height: 21px; }
input { appearance: none; flex: none; width: 13px; height: 13px; background: #fff; border: 2px solid #eee; border-top-color: #666; border-left-color: #666; }
input[type="radio"] { width: 12px; height: 12px; border: 1px solid #fff; border-top-color: #555; border-left-color: #555; border-radius: 50%; }
input[type="radio"]:checked { background: radial-gradient(circle, #000 0 2px, #fff 3px); }
.focus { outline: 1px dotted #000; line-height: 14px; }
.ring { position: absolute; left: -8px; top: -12px; width: 184px; height: 46px; pointer-events: none; }
.append { margin: 5px 0 0 18px; }
.actions { display: flex; gap: 20px; padding: 16px 23px 0 24px; }
.actions button { flex: 1; height: 22px; }
.actions .default { border: 2px solid #000; box-shadow: inset 1px 1px #fff, inset -1px -1px #808080; }

/* watermark */
.mark { position: absolute; right: 18px; bottom: -7px; width: 112px; color: rgba(255,255,255,.85); text-shadow: 0 0 1px #aaa; pointer-events: none; }
.mark svg { position: absolute; left: 39px; top: 0; width: 30px; height: 34px; opacity: .65; }
.brand { display: flex; align-items: center; padding-top: 12px; line-height: 24px; white-space: nowrap; }
.brand b { font-size: 24px; width: 42px; }
.brand .du { width: 27px; font-size: 16px; color: #aaa; text-align: center; text-shadow: none; }
.brand span { font-size: 18px; font-weight: bold; }
.site { font: 600 12px/16px "Open Sans", sans-serif; }
```
